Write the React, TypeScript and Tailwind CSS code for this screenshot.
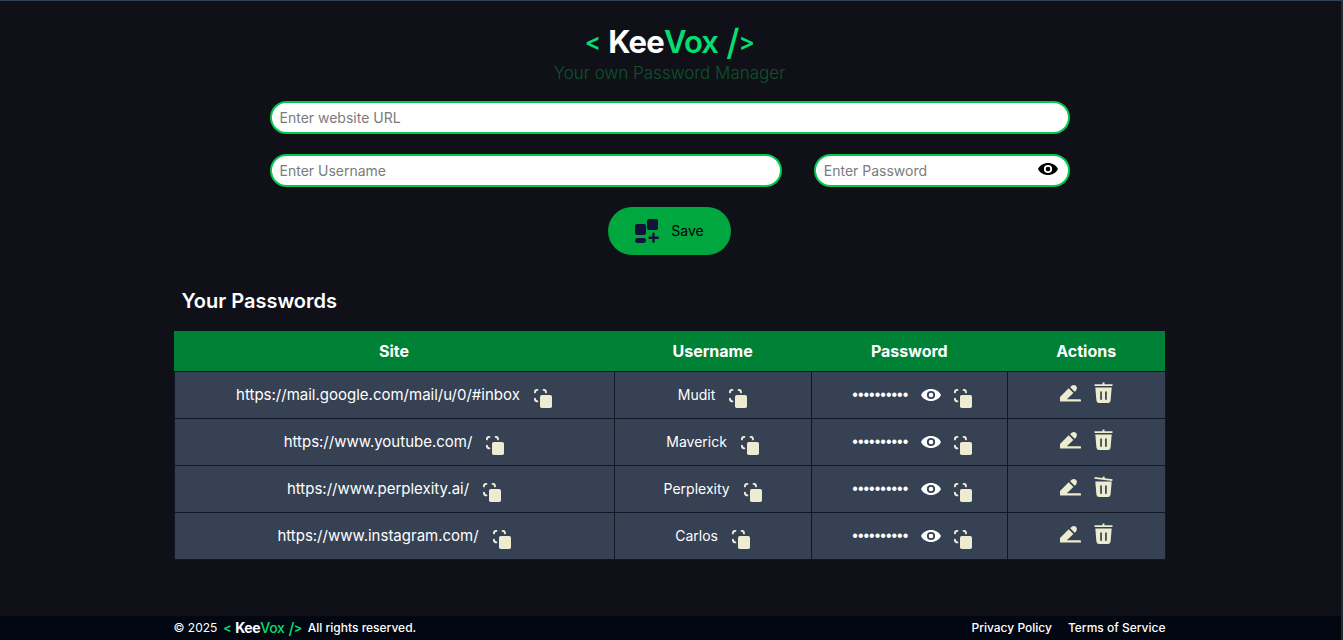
import React from "react";

type Entry = { site: string; username: string };

const entries: Entry[] = [
  { site: "https://mail.google.com/mail/u/0/#inbox", username: "Mudit" },
  { site: "https://www.youtube.com/", username: "Maverick" },
  { site: "https://www.perplexity.ai/", username: "Perplexity" },
  { site: "https://www.instagram.com/", username: "Carlos" },
];

const openLidRow = 2;

function EyeIcon() {
  return (
    <svg viewBox="0 0 20 12" className="h-3 w-5" fill="currentColor" aria-hidden="true">
      <path
        fillRule="evenodd"
        d="M10 0C5.5 0 1.6 2.5 0 6c1.6 3.5 5.5 6 10 6s8.4-2.5 10-6c-1.6-3.5-5.5-6-10-6zm0 10.100a4.100 4.100 0 1 1 0-8.200 4.100 4.100 0 0 1 0 8.200zm0-1.800a2.300 2.300 0 1 0 0-4.600 2.300 2.300 0 0 0 0 4.600z"
      />
    </svg>
  );
}

function CopyIcon() {
  return (
    <svg viewBox="0 0 18 19" className="h-[19px] w-[18px]" fill="none" aria-hidden="true">
      <path
        d="M.9 3.400Q.9.900 3.400.9M9.600.9Q12 .9 12 3.400M.9 9.600Q.9 12.200 3.400 12.400"
        stroke="currentColor"
        strokeWidth="1.900"
        strokeLinecap="round"
      />
      <rect x="6" y="6" width="12" height="13" rx="1.800" fill="currentColor" />
    </svg>
  );
}

function PencilIcon() {
  return (
    <svg viewBox="0 0 21 18" className="h-[18px] w-[21px]" fill="currentColor" aria-hidden="true">
      <path d="M8.700 4.300 13.400 9 6.800 15.300H20a1.100 1.100 0 0 1 0 2.200H.6q-.6 0-.6-.6V13z" />
      <path d="M10.200 3.200 11.600 1.800Q14 .1 16.200 2 18 4.200 16.200 6.300L14.700 7.700z" />
    </svg>
  );
}

function TrashIcon({ open }: { open: boolean }) {
  return (
    <svg viewBox="0 0 19 22" className="h-[22px] w-[19px]" fill="currentColor" aria-hidden="true">
      <g transform={open ? "rotate(7 9.5 3)" : undefined}>
        <path d="M.5 2.200h8V.5h2v1.700h8v1.700H.5z" />
      </g>
      <path
        fillRule="evenodd"
        d="M1.300 5.500h16.400l-1.100 13q-.3 2.500-2.800 2.500H5.200Q2.700 21 2.400 18.500zM6.200 9.500v8.200h1.700V9.500zm4.900 0v8.200h1.700V9.500z"
      />
    </svg>
  );
}

function SaveIcon() {
  return (
    <svg viewBox="0 0 24 24" className="size-6 text-[#14123a]" fill="currentColor" aria-hidden="true">
      <rect x="0" y="5" width="11" height="11" rx="2" />
      <rect x="12" y="0" width="11" height="11" rx="2" />
      <rect x="0" y="19" width="11" height="5" rx="2.400" />
      <path d="M18.500 14.800v8M14.500 18.800h8.300" stroke="currentColor" strokeWidth="2.400" strokeLinecap="round" />
    </svg>
  );
}

const inputClass =
  "h-[33px] rounded-full border-2 border-[#00c950] bg-white px-2 text-sm text-black placeholder:text-[#7b7b7b] outline-none";
const cellClass = "border border-[#101828] p-0";

export default function App() {
  return (
    <div className="flex min-h-screen flex-col border-t border-r-2 border-t-[#314158] border-r-[#2a2a2c] bg-[#101018] font-['Inter',sans-serif] text-white">
      <main className="w-full flex-1 pt-5 pr-0.5">
        <div className="mx-auto max-w-[992px]">
          <header className="text-center">
            <h1 className="flex h-[42px] items-center justify-center text-[31px] leading-10 font-semibold tracking-tight">
              <span className="mr-2 text-2xl text-[#05df72]">&lt;</span>
              <span className="font-bold">Kee</span>
              <span className="text-[#05df72]">Vox</span>
              <span className="ml-2 text-4xl font-medium text-[#05df72]">/</span>
              <span className="text-2xl text-[#05df72]">&gt;</span>
            </h1>
            <p className="text-[17px] leading-5 font-light text-[#0d542b]">Your own Password Manager</p>
          </header>

          <form className="mx-auto mt-[18px] flex max-w-[800px] flex-col items-center gap-5" onSubmit={(e) => e.preventDefault()}>
            <input className={`${inputClass} w-full`} placeholder="Enter website URL" aria-label="Website URL" />
            <div className="flex w-full gap-8">
              <input className={`${inputClass} w-2/3 min-w-0`} placeholder="Enter Username" aria-label="Username" />
              <div className="relative w-1/3 min-w-0">
                <input type="password" className={`${inputClass} w-full`} placeholder="Enter Password" aria-label="Password" />
                <button type="button" aria-label="Show password" className="absolute top-[9px] right-3 text-black">
                  <EyeIcon />
                </button>
              </div>
            </div>
            <button type="submit" className="flex h-12 items-center gap-3 rounded-full bg-[#00a63e] px-[27px] text-sm text-black">
              <SaveIcon />
              Save
            </button>
          </form>

          <h2 className="mt-8 px-2 text-xl leading-7 font-semibold">Your Passwords</h2>
          <table className="mt-4 w-full table-fixed border-collapse text-center text-sm">
            <colgroup>
              <col className="w-[44.4%]" />
              <col className="w-[19.9%]" />
              <col className="w-[19.8%]" />
              <col />
            </colgroup>
            <thead className="bg-[#008236] text-base">
              <tr className="h-10">
                <th className="font-bold">Site</th>
                <th className="font-bold">Username</th>
                <th className="font-bold">Password</th>
                <th className="font-bold">Actions</th>
              </tr>
            </thead>
            <tbody className="bg-[#364153]">
              {entries.map((entry, i) => (
                <tr key={entry.site} className="h-[47px]">
                  <td className={cellClass}>
                    <div className="flex items-center justify-center gap-3.5">
                      <a href={entry.site} className="text-[15px]">{entry.site}</a>
                      <button type="button" aria-label="Copy site" className="pt-2 text-[#edebd0]"><CopyIcon /></button>
                    </div>
                  </td>
                  <td className={cellClass}>
                    <div className="flex items-center justify-center gap-3.5">
                      <span>{entry.username}</span>
                      <button type="button" aria-label="Copy username" className="pt-2 text-[#edebd0]"><CopyIcon /></button>
                    </div>
                  </td>
                  <td className={cellClass}>
                    <div className="flex items-center justify-center gap-[13px] pl-1.5">
                      <span className="font-['Liberation_Sans',sans-serif] text-base">••••••••••</span>
                      <button type="button" aria-label="Show password"><EyeIcon /></button>
                      <button type="button" aria-label="Copy password" className="pt-2 text-[#edebd0]"><CopyIcon /></button>
                    </div>
                  </td>
                  <td className={cellClass}>
                    <div className="flex items-center justify-center gap-[13px] pb-1 text-[#edebd0]">
                      <button type="button" aria-label="Edit"><PencilIcon /></button>
                      <button type="button" aria-label="Delete"><TrashIcon open={i === openLidRow} /></button>
                    </div>
                  </td>
                </tr>
              ))}
            </tbody>
          </table>
        </div>
      </main>

      <footer className="bg-[#030712] pr-0.5 text-xs">
        <div className="mx-auto flex h-6 w-full max-w-[992px] items-center justify-between">
          <p className="flex items-center gap-1.5">
            <span>© 2025</span>
            <span className="flex items-center text-sm font-bold tracking-tight">
              <span className="mr-1 text-xs text-[#05df72]">&lt;</span>
              Kee
              <span className="font-medium text-[#05df72]">Vox</span>
              <span className="ml-1 text-base leading-5 font-medium text-[#05df72]">/</span>
              <span className="text-xs text-[#05df72]">&gt;</span>
            </span>
            <span className="font-medium">All rights reserved.</span>
          </p>
          <nav className="flex gap-4 font-medium">
            <a href="#privacy">Privacy Policy</a>
            <a href="#terms">Terms of Service</a>
          </nav>
        </div>
      </footer>
    </div>
  );
}
